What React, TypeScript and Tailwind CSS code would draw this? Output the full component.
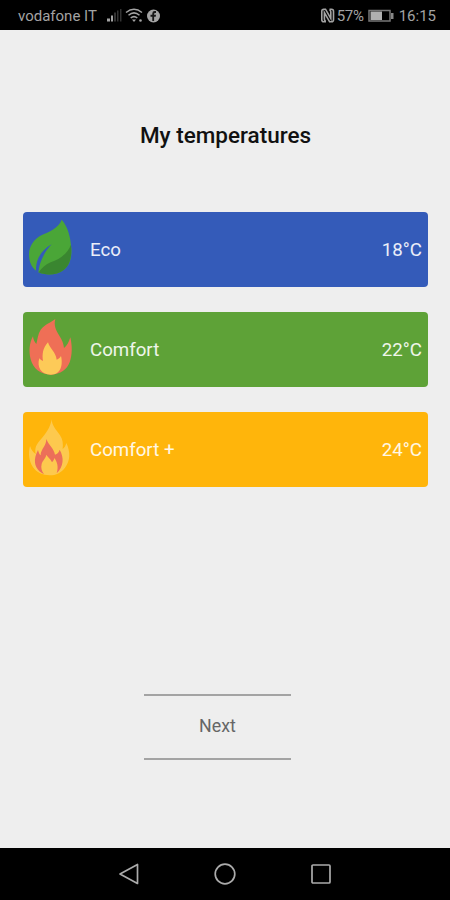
import type { ReactNode } from "react";

function LeafIcon() {
  return (
    <svg className="h-[61px] w-[45px] shrink-0" viewBox="36 42 135 183">
      <path
        d="M137 44 C128 70 98 80 76 91 C54 102 39 124 39 148 C39 171 47 187 60 197 C59 168 71 138 107 118 C84 142 70 172 67 202 C88 212 123 211 143 195 C162 180 168 156 166 130 C164 98 156 65 137 44Z"
        fill="#4aa637"
      />
      <path
        d="M165 119 C155 144 132 163 104 172 C87 179 76 191 68 202 C88 212 123 211 143 195 C162 180 168 156 165 119Z"
        fill="#3a8630"
      />
    </svg>
  );
}

function FlameIcon() {
  return (
    <svg className="h-[61px] w-[45px] shrink-0" viewBox="36 42 135 183">
      <path
        d="M118 42 C113 60 119 75 130 92 C138 104 143 116 144 129 C153 122 159 111 163 97 C169 123 169 150 161 172 C153 194 133 208 106 209 C74 209 51 191 44 163 C38 138 40 114 51 94 C52 103 55 111 61 117 C65 103 65 88 74 74 C85 59 104 53 118 42Z"
        fill="#ef6f56"
      />
      <path
        d="M96 112 C101 131 120 142 122 164 C128 162 132 158 135 153 C141 178 136 209 104 209 C75 209 62 187 70 160 C74 164 77 167 81 168 C78 148 80 130 96 112Z"
        fill="#fdca58"
      />
    </svg>
  );
}

function DoubleFlameIcon() {
  return (
    <svg className="h-[61px] w-[45px] shrink-0" viewBox="36 42 135 183">
      <path
        d="M107 43 C107 61 121 75 132 91 C140 103 142 115 140 132 C146 128 149 122 151 114 C164 141 163 168 147 188 C136 203 120 211 101 211 C80 211 62 203 51 187 C39 169 36 146 42 123 C46 135 51 142 59 147 C55 130 62 117 72 106 C90 86 103 67 107 43Z"
        fill="#fdc94e"
      />
      <path
        d="M91 102 C97 120 113 129 117 149 C124 147 129 142 131 134 C145 158 143 185 122 205 C128 186 124 171 115 159 C114 164 112 168 108 172 C104 161 95 157 91 149 C90 159 80 166 77 177 C74 188 77 198 84 208 C63 197 53 179 58 156 C60 149 62 143 66 135 C68 143 70 148 74 151 C74 132 91 124 91 102Z"
        fill="#ec6f59"
      />
    </svg>
  );
}

function TemperatureCard({ name, value, color, icon }: { name: string; value: string; color: string; icon: ReactNode }) {
  return (
    <div className={`flex h-[75px] items-center rounded pr-[6px] pl-[5px] text-[18.7px] text-white/90 ${color}`}>
      {icon}
      <span className="ml-[17px] flex-1 pt-[2px]">{name}</span>
      <span className="pt-[2px]">{value}</span>
    </div>
  );
}

function StatusBar() {
  return (
    <header className="flex h-[30px] items-center bg-black pt-[2px] pr-[14px] pl-[18px] text-[15px] text-[#a3a3a3]">
      <span className="w-[88px] whitespace-nowrap">vodafone IT</span>
      <svg className="h-[16px] w-[56px]" viewBox="106 8 56 16">
        <path d="M107 21.5v-3h3v3zM111 21.5v-6h2v6z" fill="#a3a3a3" />
        <path d="M114 21.5v-9h2v9zM117 21.5v-11h1.5v11zM120 21.5V9h1.5v12.5z" fill="#333" />
        <path
          d="M126 12.5Q134 6 142 12.5M128.5 15.3Q134 10.500 139.5 15.3M130.7 18Q134 15.200 137.3 18"
          fill="none"
          stroke="#a3a3a3"
          strokeWidth="1.5"
        />
        <path d="M132 19.500h4l-2 2.500z" fill="#a3a3a3" />
        <circle cx="140.500" cy="20.500" r="1.300" fill="#a3a3a3" />
        <circle cx="153.500" cy="16" r="6.500" fill="#a3a3a3" />
        <path d="M152.300 21v-4.300h-1.800v-2h1.800v-1.300q0-2.400 2.400-2.400h1.300v1.900h-.9q-1 0-1 1v.8h1.900l-.3 2h-1.600V21z" fill="#161616" />
      </svg>
      <span className="flex-1" />
      <svg className="h-[16px] w-[16px]" viewBox="320 8 16 16">
        <path
          d="M326 21.800h-2.200q-2 0-2-2v-8.600q0-2 2-2h1.700l5.300 9.300V12q0-1.500-1.300-2.500M329.500 9.200h2q2 0 2 2v8.600q0 2-2 2h-1.900l-5.200-9.300v6.500q0 1.500 1.300 2.500"
          fill="none"
          stroke="#a3a3a3"
          strokeWidth="1.6"
        />
      </svg>
      <span className="ml-px w-[31px] whitespace-nowrap text-[15px] tracking-[-0.300px]">57%</span>
      <svg className="h-[14px] w-[27px]" viewBox="368 9 27 14">
        <rect x="369" y="10.500" width="21" height="10.500" fill="none" stroke="#777" strokeWidth="1.5" />
        <path d="M370.500 11.500h11.500v8.500h-11.500z" fill="#b0b0b0" />
        <path d="M391 13h2.500v6H391z" fill="#888" />
      </svg>
      <span className="ml-[4px] whitespace-nowrap">16:15</span>
    </header>
  );
}

export default function App() {
  return (
    <div className="flex h-[900px] w-[450px] flex-col bg-[#eeeeee] font-['Roboto',sans-serif]">
      <StatusBar />
      <main className="flex flex-1 flex-col items-center pt-[91px]">
        <h1 className="ml-px h-[28px] text-[22.5px] leading-[28px] font-medium text-[#111]">My temperatures</h1>
        <section className="mt-[63px] ml-px flex w-[405px] flex-col gap-[25px]">
          <TemperatureCard name="Eco" value="18°C" color="bg-[#345bb9]" icon={<LeafIcon />} />
          <TemperatureCard name="Comfort" value="22°C" color="bg-[#5ea237]" icon={<FlameIcon />} />
          <TemperatureCard name="Comfort +" value="24°C" color="bg-[#ffb50b]" icon={<DoubleFlameIcon />} />
        </section>
        <button className="mt-[207px] mr-[16px] flex h-[66px] w-[147px] items-center justify-center border-y-2 border-[#a3a3a3] pb-px pl-px text-[17.8px] text-[#666]">
          Next
        </button>
      </main>
      <nav className="flex h-[52px] items-center justify-center gap-[74px] bg-black">
        <svg className="size-[22px]" viewBox="0 0 22 22" fill="none" stroke="#ababab" strokeWidth="1.7">
          <path d="M19.500 1.500v19L2 11z" strokeLinejoin="round" />
        </svg>
        <svg className="size-[22px]" viewBox="0 0 22 22" fill="none" stroke="#ababab" strokeWidth="1.7">
          <circle cx="11" cy="11" r="9.800" />
        </svg>
        <svg className="size-[22px]" viewBox="0 0 22 22" fill="none" stroke="#ababab" strokeWidth="1.7">
          <rect x="2" y="2" width="18" height="18" rx="1" />
        </svg>
      </nav>
    </div>
  );
}
